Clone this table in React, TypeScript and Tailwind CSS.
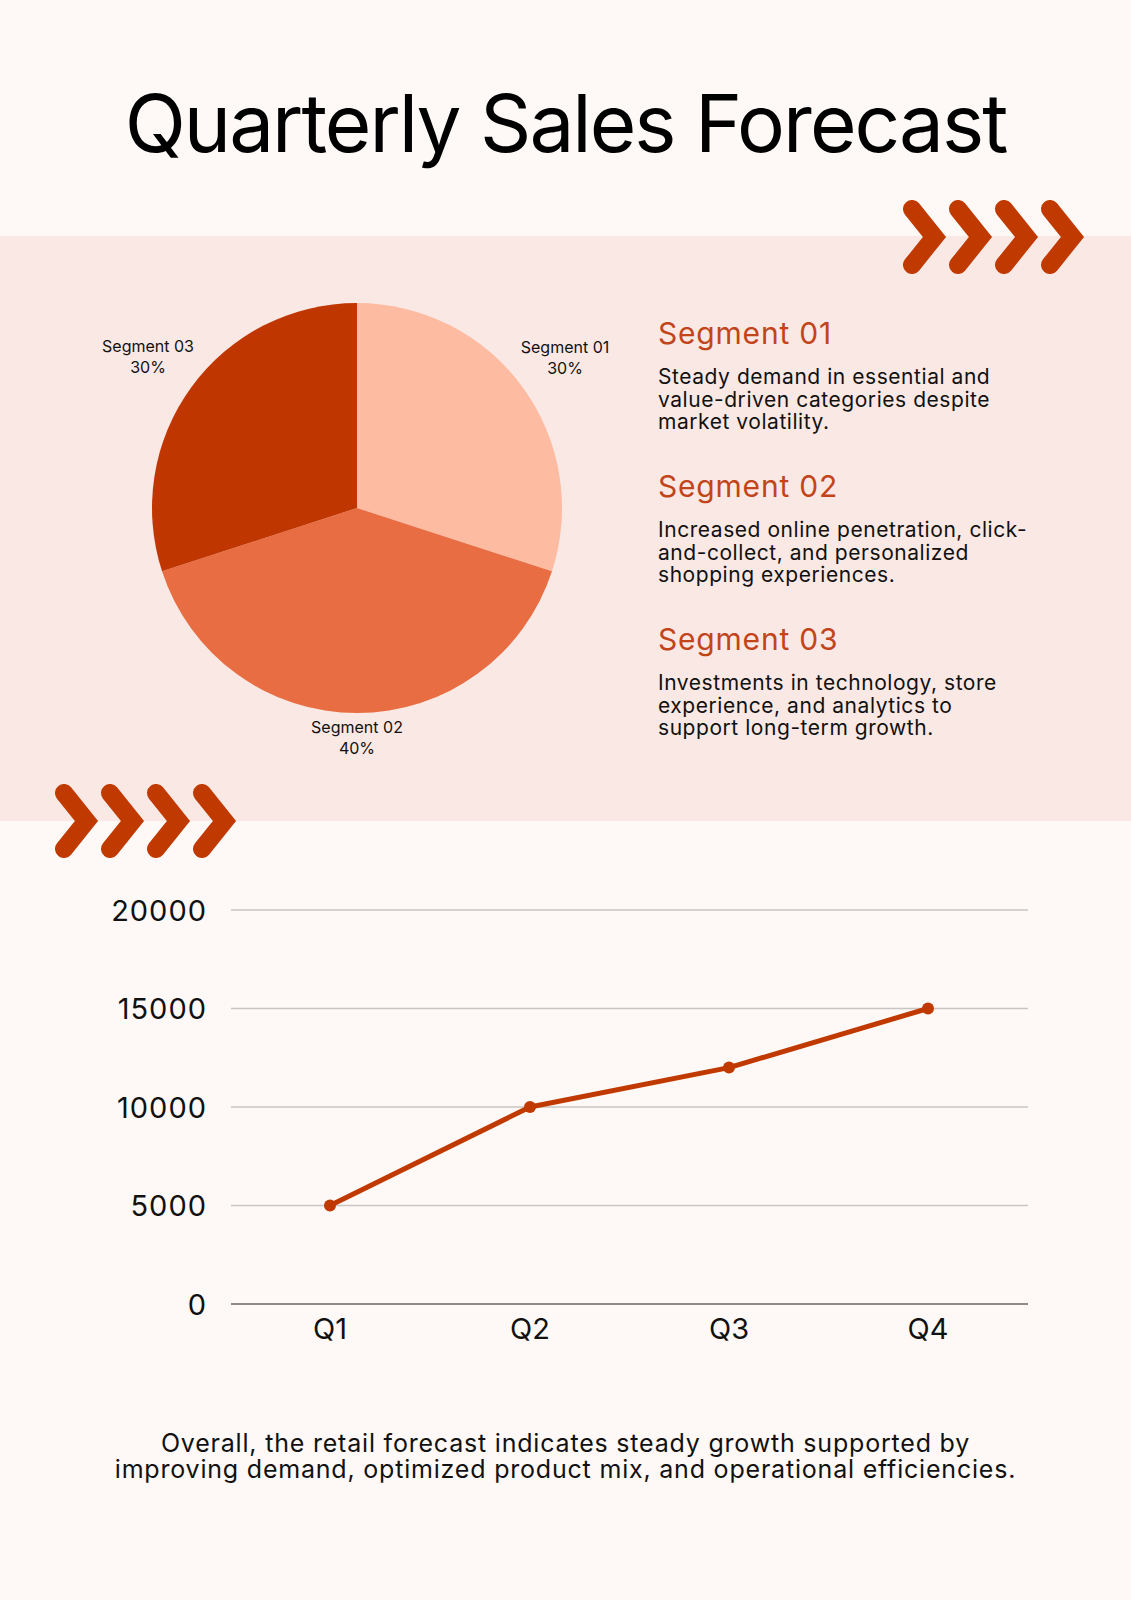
const font = { fontFamily: "Inter, 'Noto Sans', sans-serif" };

function Chevrons() {
  return (
    <svg width="184" height="74" viewBox="0 0 184 74">
      {[0, 1, 2, 3].map((i) => (
        <polyline
          key={i}
          points={`${9 + i * 46},9 ${31.5 + i * 46},37 ${9 + i * 46},65`}
          fill="none"
          stroke="#C03A00"
          strokeWidth="18"
          strokeLinecap="round"
          strokeLinejoin="miter"
        />
      ))}
    </svg>
  );
}

// pie slice path, angles in degrees clockwise from 12 o'clock
function slice(cx: number, cy: number, r: number, a0: number, a1: number) {
  const p = (a: number) => {
    const t = (a * Math.PI) / 180;
    return [cx + r * Math.sin(t), cy - r * Math.cos(t)];
  };
  const [x0, y0] = p(a0);
  const [x1, y1] = p(a1);
  const large = a1 - a0 > 180 ? 1 : 0;
  return `M${cx},${cy} L${x0},${y0} A${r},${r} 0 ${large} 1 ${x1},${y1} Z`;
}

function PieChart() {
  const cx = 357;
  const cy = 272;
  const r = 205;
  const labels = [
    { x: 148, y: 110, name: "Segment 03", pct: "30%" },
    { x: 565, y: 111, name: "Segment 01", pct: "30%" },
    { x: 357, y: 491, name: "Segment 02", pct: "40%" },
  ];
  return (
    <svg width="658" height="585" viewBox="0 0 658 585" className="flex-none">
      <path d={slice(cx, cy, r, 0, 108)} fill="#FDBBA2" />
      <path d={slice(cx, cy, r, 108, 252)} fill="#E86D42" />
      <path d={slice(cx, cy, r, 252, 360)} fill="#BF3600" />
      {labels.map((l) => (
        <g key={l.name} fontSize="16" fill="#111" textAnchor="middle" style={font}>
          <text x={l.x} y={l.y} dominantBaseline="central">
            {l.name}
          </text>
          <text x={l.x} y={l.y + 21} dominantBaseline="central">
            {l.pct}
          </text>
        </g>
      ))}
    </svg>
  );
}

const segments = [
  {
    title: "Segment 01",
    lines: ["Steady demand in essential and", "value-driven categories despite", "market volatility."],
  },
  {
    title: "Segment 02",
    lines: ["Increased online penetration, click-", "and-collect, and personalized", "shopping experiences."],
  },
  {
    title: "Segment 03",
    lines: ["Investments in technology, store", "experience, and analytics to", "support long-term growth."],
  },
];

function LineChart() {
  const ys = [89, 187.5, 286, 384.5, 483];
  const ticks = ["20000", "15000", "10000", "5000", "0"];
  const data = [5000, 10000, 12000, 15000];
  const xs = [330, 530, 729, 928];
  const toY = (v: number) => 483 - (v / 5000) * 98.5;
  const pts = data.map((v, i) => `${xs[i]},${toY(v)}`).join(" ");
  return (
    <svg width="1131" height="540" viewBox="0 0 1131 540" className="block" style={font}>
      {ys.map((y, i) => (
        <g key={y}>
          <line
            x1="231"
            x2="1028"
            y1={y}
            y2={y}
            stroke={i === 4 ? "#8E8A88" : "#C9C5C3"}
            strokeWidth={i === 4 ? 2 : 1.5}
          />
          <text
            x="207"
            y={y}
            textAnchor="end"
            dominantBaseline="central"
            fontSize="29"
            letterSpacing="1"
            fill="#111"
          >
            {ticks[i]}
          </text>
        </g>
      ))}
      {["Q1", "Q2", "Q3", "Q4"].map((q, i) => (
        <text key={q} x={xs[i]} y="507" textAnchor="middle" dominantBaseline="central" fontSize="29" fill="#111">
          {q}
        </text>
      ))}
      <polyline points={pts} fill="none" stroke="#C03A00" strokeWidth="5" strokeLinejoin="round" />
      {data.map((v, i) => (
        <circle key={i} cx={xs[i]} cy={toY(v)} r="6" fill="#C03A00" />
      ))}
    </svg>
  );
}

export default function App() {
  return (
    <div className="w-[1131px] min-h-[1600px] bg-[#FEF9F6] text-black" style={font}>
      <h1 className="pt-[83px] text-center text-[80px] leading-[80px] font-normal tracking-[-2px]">
        Quarterly Sales Forecast
      </h1>

      <section className="relative mt-[73px] flex h-[585px] bg-[#FAE8E4]">
        <div className="absolute -top-[36px] left-[903px]">
          <Chevrons />
        </div>
        <PieChart />
        <div className="w-[420px] pt-[79px]">
          {segments.map((s, i) => (
            <div key={s.title} className={i > 0 ? "mt-[34.5px]" : ""}>
              <h2 className="text-[30px] leading-[36px] tracking-[0.8px] text-[#C2441A]">{s.title}</h2>
              <p className="mt-[15px] text-[21px] leading-[22.5px] tracking-[0.55px] text-[#111]">
                {s.lines.map((l) => (
                  <span key={l} className="block whitespace-nowrap">
                    {l}
                  </span>
                ))}
              </p>
            </div>
          ))}
        </div>
        <div className="absolute top-[548px] left-[55px]">
          <Chevrons />
        </div>
      </section>

      <LineChart />

      <p className="mt-[69px] text-center text-[25px] leading-[26px] tracking-[0.8px] text-[#111]">
        <span className="block whitespace-nowrap">Overall, the retail forecast indicates steady growth supported by</span>
        <span className="block whitespace-nowrap">
          improving demand, optimized product mix, and operational efficiencies.
        </span>
      </p>
    </div>
  );
}
